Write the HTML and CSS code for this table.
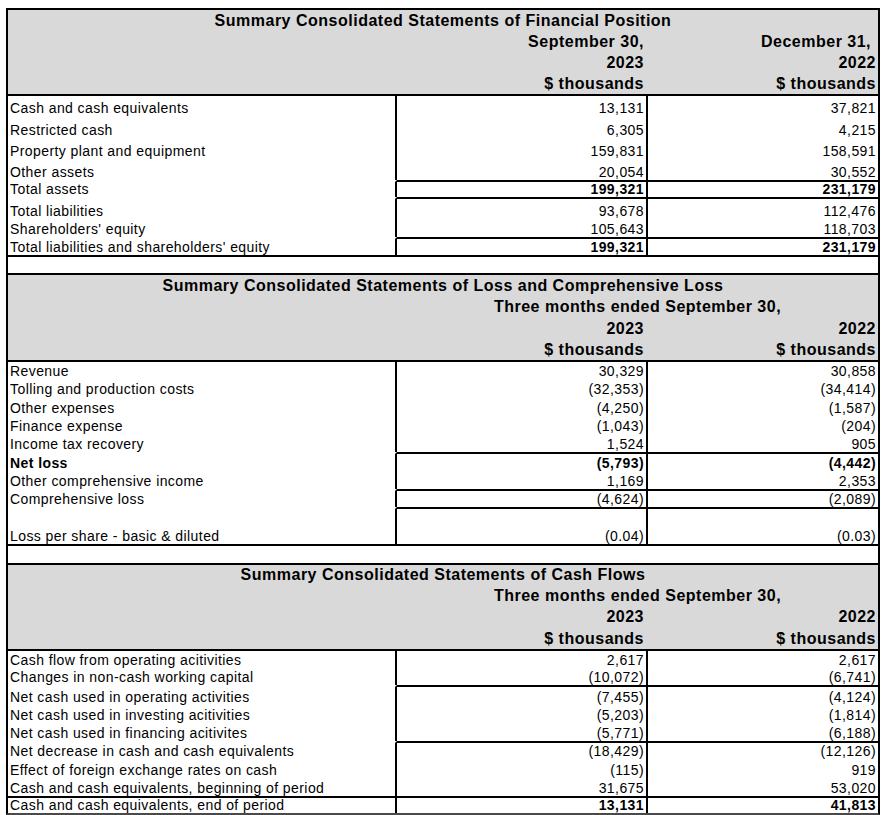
FILE: index.html
```html
<!DOCTYPE html>
<html>
<head>
<meta charset="utf-8">
<title>Summary Consolidated Statements</title>
<link rel="stylesheet" href="styles.css">
</head>
<body>
<table class="fs">
<colgroup><col class="c-l"><col class="c-a"><col class="c-b"></colgroup>
<tbody>
<tr class="h r21"><td colspan="3" class="title">Summary Consolidated Statements of Financial Position</td></tr>
<tr class="h r21"><td class="l"></td><td class="a">September 30,</td><td class="b">December 31,&nbsp;</td></tr>
<tr class="h r21"><td class="l"></td><td class="a">2023</td><td class="b">2022</td></tr>
<tr class="h r21"><td class="l"></td><td class="a">$ thousands</td><td class="b">$ thousands</td></tr>

<tr class="rf r22"><td class="l">Cash and cash equivalents</td><td class="a">13,131</td><td class="b">37,821</td></tr>
<tr class="r22"><td class="l">Restricted cash</td><td class="a">6,305</td><td class="b">4,215</td></tr>
<tr class="r21"><td class="l">Property plant and equipment</td><td class="a">159,831</td><td class="b">158,591</td></tr>
<tr class="r21"><td class="l">Other assets</td><td class="a">20,054</td><td class="b">30,552</td></tr>
<tr class="rn r17"><td class="l">Total assets</td><td class="a bold">199,321</td><td class="b bold">231,179</td></tr>
<tr class="rn r22"><td class="l">Total liabilities</td><td class="a">93,678</td><td class="b">112,476</td></tr>
<tr class="r18"><td class="l">Shareholders' equity</td><td class="a">105,643</td><td class="b">118,703</td></tr>
<tr class="rn r18"><td class="l">Total liabilities and shareholders' equity</td><td class="a bold">199,321</td><td class="b bold">231,179</td></tr>
<tr class="rf r18 gap"><td colspan="3"></td></tr>

<tr class="h rf r23"><td colspan="3" class="title">Summary Consolidated Statements of Loss and Comprehensive Loss</td></tr>
<tr class="h r21"><td class="l"></td><td colspan="2" class="mid">Three months ended September 30,</td></tr>
<tr class="h r22"><td class="l"></td><td class="a">2023</td><td class="b">2022</td></tr>
<tr class="h r21"><td class="l"></td><td class="a">$ thousands</td><td class="b">$ thousands</td></tr>

<tr class="rf r19"><td class="l">Revenue</td><td class="a">30,329</td><td class="b">30,858</td></tr>
<tr class="r18"><td class="l">Tolling and production costs</td><td class="a">(32,353)</td><td class="b">(34,414)</td></tr>
<tr class="r19"><td class="l">Other expenses</td><td class="a">(4,250)</td><td class="b">(1,587)</td></tr>
<tr class="r18"><td class="l">Finance expense</td><td class="a">(1,043)</td><td class="b">(204)</td></tr>
<tr class="r18"><td class="l">Income tax recovery</td><td class="a">1,524</td><td class="b">905</td></tr>
<tr class="rn r19"><td class="l bold">Net loss</td><td class="a bold">(5,793)</td><td class="b bold">(4,442)</td></tr>
<tr class="r18"><td class="l">Other comprehensive income</td><td class="a">1,169</td><td class="b">2,353</td></tr>
<tr class="rn r18"><td class="l">Comprehensive loss</td><td class="a">(4,624)</td><td class="b">(2,089)</td></tr>
<tr class="rn r37"><td class="l">Loss per share - basic &amp; diluted</td><td class="a">(0.04)</td><td class="b">(0.03)</td></tr>
<tr class="rf r19 gap"><td colspan="3"></td></tr>

<tr class="h rf r22"><td colspan="3" class="title">Summary Consolidated Statements of Cash Flows</td></tr>
<tr class="h r21"><td class="l"></td><td colspan="2" class="mid">Three months ended September 30,</td></tr>
<tr class="h r21"><td class="l"></td><td class="a">2023</td><td class="b">2022</td></tr>
<tr class="h r22"><td class="l"></td><td class="a">$ thousands</td><td class="b">$ thousands</td></tr>

<tr class="rf r19"><td class="l">Cash flow from operating acitivities</td><td class="a">2,617</td><td class="b">2,617</td></tr>
<tr class="r17"><td class="l">Changes in non-cash working capital</td><td class="a">(10,072)</td><td class="b">(6,741)</td></tr>
<tr class="rn r20"><td class="l">Net cash used in operating activities</td><td class="a">(7,455)</td><td class="b">(4,124)</td></tr>
<tr class="r18"><td class="l">Net cash used in investing acitivities</td><td class="a">(5,203)</td><td class="b">(1,814)</td></tr>
<tr class="r18"><td class="l">Net cash used in financing acitivites</td><td class="a">(5,771)</td><td class="b">(6,188)</td></tr>
<tr class="rn r18"><td class="l">Net decrease in cash and cash equivalents</td><td class="a">(18,429)</td><td class="b">(12,126)</td></tr>
<tr class="r19"><td class="l">Effect of foreign exchange rates on cash</td><td class="a">(115)</td><td class="b">919</td></tr>
<tr class="r18"><td class="l">Cash and cash equivalents, beginning of period</td><td class="a">31,675</td><td class="b">53,020</td></tr>
<tr class="rf r17"><td class="l">Cash and cash equivalents, end of period</td><td class="a bold">13,131</td><td class="b bold">41,813</td></tr>
</tbody>
</table>
</body>
</html>
```

FILE: styles.css
```css
html, body {
  margin: 0;
  padding: 0;
  background: #ffffff;
  overflow: hidden;
}
body {
  padding: 8px 0 0 6px;
  font-family: "Liberation Sans", Arial, sans-serif;
  color: #000;
}
.fs {
  border-collapse: separate;
  border-spacing: 0;
  table-layout: fixed;
  width: 874px;
  border: 2px solid #000;
  border-bottom-color: #4a4a4a;
}
.c-l { width: 389px; }
.c-a { width: 251px; }
.c-b { width: 230px; }

.fs td {
  box-sizing: border-box;
  padding: 0;
  vertical-align: bottom;
  font-size: 14px;
  line-height: 15px;
  letter-spacing: 0.42px;
  white-space: nowrap;
  overflow: hidden;
}
.fs td.l {
  padding-left: 2px;
  border-right: 2px solid #000;
}
.fs td.a {
  text-align: right;
  padding-right: 2px;
  border-right: 2px solid #000;
}
.fs td.b {
  text-align: right;
  padding-right: 2px;
}
.fs td.bold { font-weight: bold; }

/* header rows */
.fs tr.h td {
  background: #d9d9d9;
  font-weight: bold;
  font-size: 16px;
  line-height: 18px;
  letter-spacing: 0.5px;
  padding-bottom: 1px;
  border-right-color: transparent;
}
.fs td.title { text-align: center; }
.fs td.mid { text-align: center; }

/* rules */
.fs tr.rf td { border-top: 2px solid #000; }
.fs tr.rn td { border-top: 2px solid #000; }
.fs tr.rn td.l { border-top-color: transparent; }
.fs tr.gap td { border-right: none; }

/* row heights */
.r17 { height: 17px; }
.r18 { height: 18px; }
.r19 { height: 19px; }
.r20 { height: 20px; }
.r21 { height: 21px; }
.r22 { height: 22px; }
.r23 { height: 23px; }
.r37 { height: 37px; }
```
